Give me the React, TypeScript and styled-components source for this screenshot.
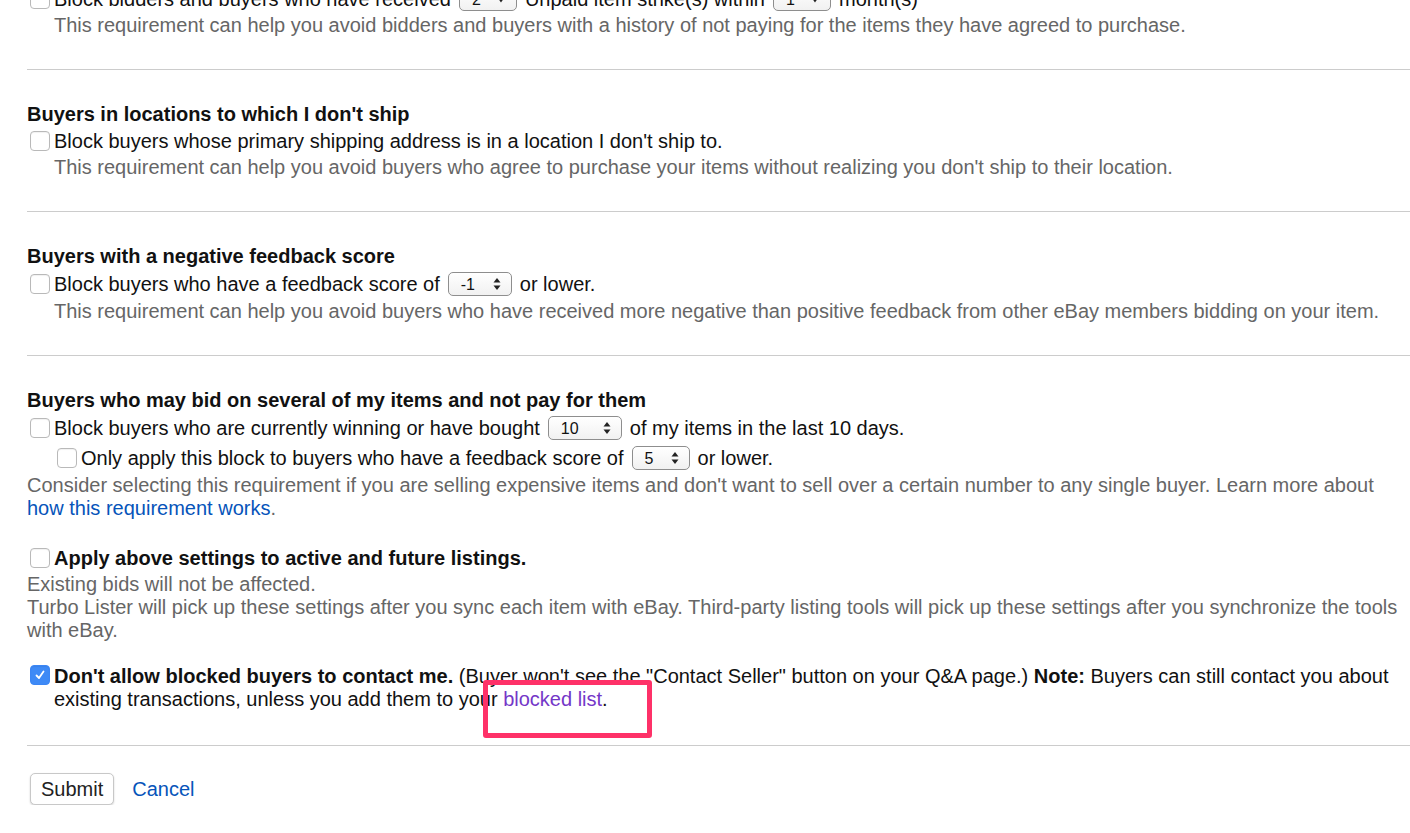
import * as React from 'react';
import styled, { createGlobalStyle } from 'styled-components';

const GlobalStyle = createGlobalStyle`
  html, body {
    margin: 0;
    padding: 0;
    background: #ffffff;
    overflow: hidden;
  }
  body {
    font-family: "Liberation Sans", Arial, Helvetica, sans-serif;
    font-size: 20px;
    color: #111111;
  }
`;

const Page = styled.form`
  margin-top: -72px;
  padding-left: 27px;
`;

const Section = styled.section<{ $last?: boolean }>`
  padding: 33px 0 ${p => (p.$last ? '34px' : '32px')};
  border-bottom: 1px solid #cccccc;
`;

const Heading = styled.h2`
  margin: 0;
  font-size: 20px;
  line-height: 23px;
  font-weight: bold;
  color: #111111;
`;

const Row = styled.div<{ $indent?: boolean; $select?: boolean }>`
  display: flex;
  align-items: center;
  min-height: ${p => (p.$select ? '30px' : '28px')};
  margin-top: ${p => (p.$indent ? '0' : '1px')};
  margin-left: ${p => (p.$indent ? '27px' : '0')};
  line-height: 23px;
  white-space: nowrap;
`;

const Label = styled.span<{ $bold?: boolean }>`
  font-weight: ${p => (p.$bold ? 'bold' : 'normal')};
  color: #111111;
`;

const Hint = styled.p<{ $flush?: boolean }>`
  margin: 1px 0 0 ${p => (p.$flush ? '0' : '27px')};
  line-height: 23px;
  color: #666666;
`;

const Box = styled.span<{ $checked?: boolean }>`
  flex: 0 0 auto;
  display: inline-flex;
  align-items: center;
  justify-content: center;
  width: 20px;
  height: 20px;
  margin: 0 4px 0 3px;
  box-sizing: border-box;
  border-radius: 4px;
  border: 1px solid ${p => (p.$checked ? '#3b86f5' : '#b9b9b9')};
  background: ${p => (p.$checked ? '#3e8af6' : '#ffffff')};
  box-shadow: inset 0 1px 1px rgba(0, 0, 0, 0.06);
`;

const SelectBox = styled.span<{ $width: number }>`
  display: inline-flex;
  align-items: center;
  justify-content: space-between;
  box-sizing: border-box;
  width: ${p => p.$width}px;
  height: 24px;
  margin: 0 8px;
  padding: 0 10px 0 12px;
  border: 1px solid #8e8e8e;
  border-radius: 5px;
  background: linear-gradient(#ffffff, #f1f1f1);
  font-size: 16px;
  color: #111111;
`;

const Link = styled.a<{ $visited?: boolean }>`
  color: ${p => (p.$visited ? '#7437c8' : '#0654ba')};
  text-decoration: none;
`;

const Notice = styled.p`
  display: flex;
  align-items: flex-start;
  margin: 23px 0 0;
  line-height: 23px;
`;

const NoticeText = styled.span`
  color: #111111;
`;

const Anchor = styled.span`
  position: relative;
`;

const Highlight = styled.span`
  position: absolute;
  left: -20px;
  top: -8px;
  width: 169px;
  height: 58px;
  box-sizing: border-box;
  border: 5px solid #fe3168;
  border-radius: 3px;
  pointer-events: none;
`;

const Footer = styled.div`
  display: flex;
  align-items: center;
  gap: 18px;
  padding: 27px 0 0 3px;
`;

const Button = styled.button`
  height: 32px;
  padding: 0 10px;
  border: 1px solid #c8c8c8;
  border-radius: 5px;
  background: #ffffff;
  box-shadow: 0 1px 2px rgba(0, 0, 0, 0.18);
  font-family: inherit;
  font-size: 20px;
  color: #222222;
`;

function Checkbox({ checked }: { checked?: boolean }) {
  return (
    <Box $checked={checked}>
      {checked && (
        <svg width="12" height="12" viewBox="0 0 12 12">
          <path d="M2.5 6.5 L5 9 L9.5 2.5" fill="none" stroke="#fff" strokeWidth="1.8" strokeLinecap="round" strokeLinejoin="round" />
        </svg>
      )}
    </Box>
  );
}

function Select({ value, width, single }: { value: string; width: number; single?: boolean }) {
  return (
    <SelectBox $width={width}>
      <span>{value}</span>
      {single ? (
        <svg width="10" height="8" viewBox="0 0 10 8">
          <path d="M0.5 1 L9.5 1 L5 7.5 Z" fill="#222" />
        </svg>
      ) : (
        <svg width="8" height="14" viewBox="0 0 8 14">
          <path d="M4 1 L7.5 5.5 L0.5 5.5 Z" fill="#222" />
          <path d="M4 13 L7.5 8.5 L0.5 8.5 Z" fill="#222" />
        </svg>
      )}
    </SelectBox>
  );
}

export default function App() {
  return (
    <>
      <GlobalStyle />
      <Page onSubmit={e => e.preventDefault()}>
        <Section>
          <Heading>Buyers with unpaid item strikes</Heading>
          <Row>
            <Checkbox />
            <Label>Block bidders and buyers who have received</Label>
            <Select value="2" width={58} single />
            <Label>Unpaid item strike(s) within</Label>
            <Select value="1" width={58} single />
            <Label>month(s)</Label>
          </Row>
          <Hint>This requirement can help you avoid bidders and buyers with a history of not paying for the items they have agreed to purchase.</Hint>
        </Section>

        <Section>
          <Heading>Buyers in locations to which I don't ship</Heading>
          <Row>
            <Checkbox />
            <Label>Block buyers whose primary shipping address is in a location I don't ship to.</Label>
          </Row>
          <Hint>This requirement can help you avoid buyers who agree to purchase your items without realizing you don't ship to their location.</Hint>
        </Section>

        <Section>
          <Heading>Buyers with a negative feedback score</Heading>
          <Row $select>
            <Checkbox />
            <Label>Block buyers who have a feedback score of</Label>
            <Select value="-1" width={64} />
            <Label>or lower.</Label>
          </Row>
          <Hint>This requirement can help you avoid buyers who have received more negative than positive feedback from other eBay members bidding on your item.</Hint>
        </Section>

        <Section $last>
          <Heading>Buyers who may bid on several of my items and not pay for them</Heading>
          <Row $select>
            <Checkbox />
            <Label>Block buyers who are currently winning or have bought</Label>
            <Select value="10" width={74} />
            <Label>of my items in the last 10 days.</Label>
          </Row>
          <Row $indent $select>
            <Checkbox />
            <Label>Only apply this block to buyers who have a feedback score of</Label>
            <Select value="5" width={58} />
            <Label>or lower.</Label>
          </Row>
          <Hint $flush>
            Consider selecting this requirement if you are selling expensive items and don't want to sell over a certain number to any single buyer. Learn more about{' '}
            <Link href="#">how this requirement works</Link>.
          </Hint>

          <Row style={{ marginTop: 24 }}>
            <Checkbox />
            <Label $bold>Apply above settings to active and future listings.</Label>
          </Row>
          <Hint $flush>
            Existing bids will not be affected.
            <br />
            Turbo Lister will pick up these settings after you sync each item with eBay. Third-party listing tools will pick up these settings after you synchronize the tools with eBay.
          </Hint>

          <Notice>
            <Checkbox checked />
            <NoticeText>
              <b>Don't allow blocked buyers to contact me.</b> (Buyer won't see the "Contact Seller" button on your Q&amp;A page.) <b>Note:</b> Buyers can still contact you about existing transactions, unless you add them to your{' '}
              <Anchor>
                <Link href="#" $visited>blocked list</Link>
                <Highlight />
              </Anchor>
              .
            </NoticeText>
          </Notice>
        </Section>

        <Footer>
          <Button type="submit">Submit</Button>
          <Link href="#">Cancel</Link>
        </Footer>
      </Page>
    </>
  );
}
